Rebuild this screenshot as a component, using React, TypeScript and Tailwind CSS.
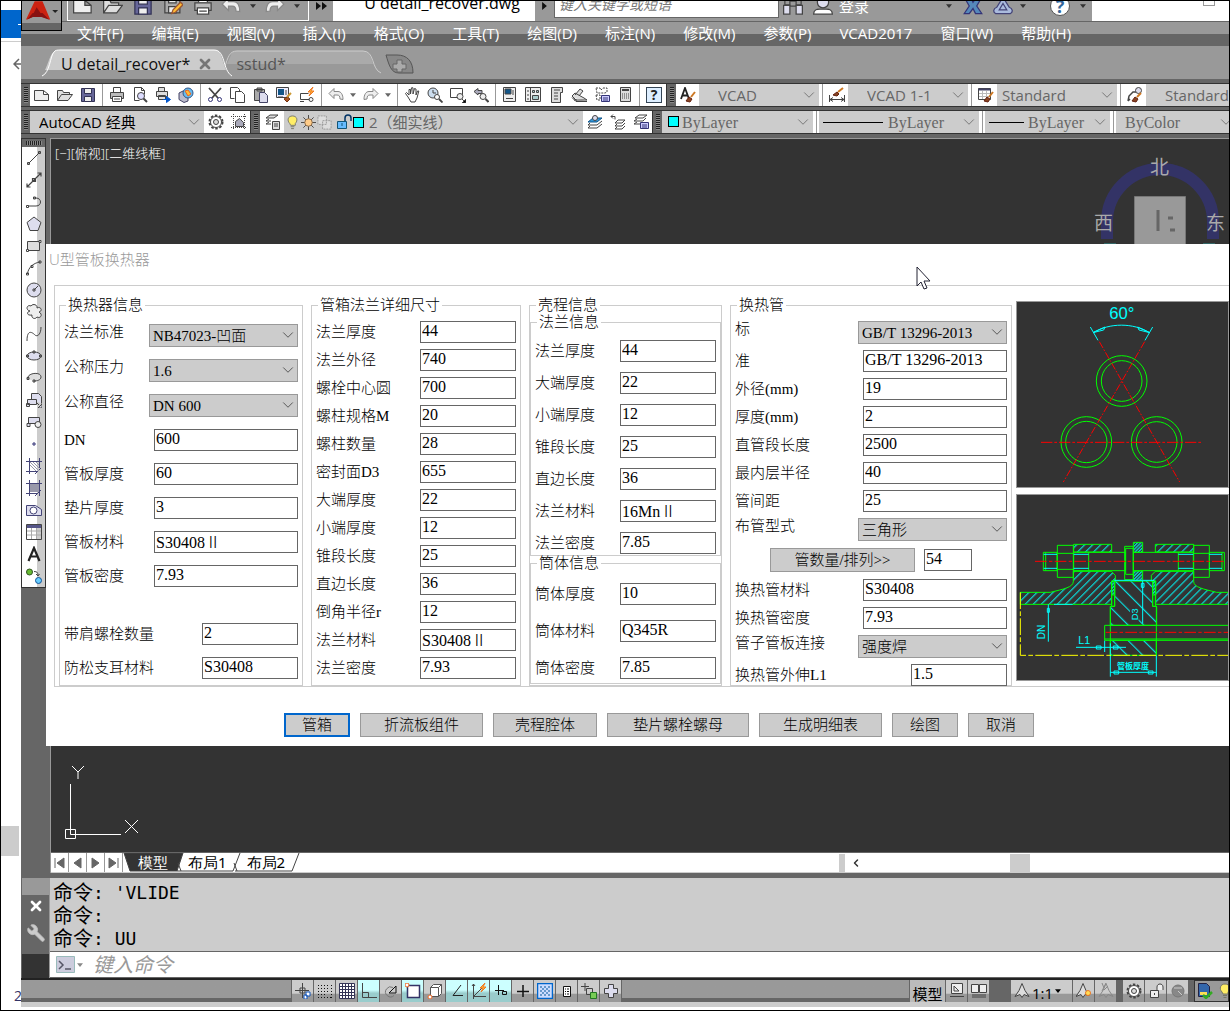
import { useId, type ReactNode } from "react";
import { ChevronDown, ChevronLeft, Wrench, X } from "lucide-react";

const icons: Record<string, ReactNode> = {
  new: <path d="M.5 3.500h9l5 4v6H.5zM9.500 3.500v4h5" fill="#eee" />,
  open: <path d="M.5 13.500v-10h5l1 2h6v2M.5 13.500l4-6h11l-4.500 6z" fill="#ddd" />,
  save: (
    <>
      <path d="M1.500 1.500h13v13h-13z" fill="#669" stroke="#335" />
      <path d="M4.500 1.500h7v5h-7zM4.500 9.500h7v5h-7z" fill="#eee" stroke="#335" />
    </>
  ),
  saveAs: (
    <>
      <path d="M1.500 1.500h12v12h-12z" fill="#aaa" />
      <path d="M4.500 1.500h6v4h-6zM4.500 8.500h6v5h-6z" fill="#eee" />
      <path d="M7 14l1-3 6-6 2 2-6 6z" fill="#fb3" stroke="#953" />
    </>
  ),
  print: (
    <>
      <path d="M4.500 5V.5h7V5" fill="#fff" />
      <path d="M1.500 5.500h13v6h-13z" fill="#bbb" />
      <path d="M3.500 9.500h9v5h-9zM5 12h6" fill="#fff" />
    </>
  ),
  preview: (
    <>
      <path d="M2.500 13.500V.5h7l3 3v4M2.500 13.500h5M9.500.5v3h3" fill="#fff" />
      <circle cx="9" cy="9" r="3.500" fill="#ddf" />
      <path d="M11.500 11.500l3.500 3.500" strokeWidth="2" />
    </>
  ),
  publish: (
    <>
      <path d="M3.500 4V.5h6V4M1.500 4.500h11v5h-11zM3.500 8.500h7v4h-7z" fill="#ddd" />
      <path d="M8 12.500h5M11.500 9.500l4 3-4 3z" stroke="#05c" fill="#05c" />
    </>
  ),
  dwf: (
    <>
      <path d="M1 6l4-2 5 3v7l-4 1.500-5-3z" fill="#bbc" stroke="#446" />
      <circle cx="10" cy="6" r="5" fill="#6be" stroke="#358" />
      <path d="M7 4l3-1 3 4-3 2z" fill="#fb3" stroke="#e62" />
    </>
  ),
  cut: (
    <>
      <path d="M2 1l9 10M14 1L5 11" strokeWidth="1.800" />
      <circle cx="3.500" cy="12.500" r="2" stroke="#337" />
      <circle cx="12.500" cy="12.500" r="2" stroke="#337" />
    </>
  ),
  copy: <path d="M.5 11.500V.5h7l2 2v2M.5 11.500h4M5.500 4.500h6l3 3v8h-9z" fill="#fff" />,
  paste: (
    <>
      <path d="M1.500 2.500h10v11h-10zM4 1h5v3H4z" fill="#aaa" />
      <path d="M6.500 5.500h5l3 3v7h-8z" fill="#dde" stroke="#446" />
    </>
  ),
  match: (
    <>
      <path d="M.5.5h12v10H.5z" fill="#eef" />
      <path d="M2 2h6v6H2z" fill="#158" stroke="none" />
      <path d="M10 3v5M2 10h5" />
      <path d="M8 12l3-2 3 2-3 3z" fill="#a52" stroke="#731" />
      <path d="M11 10l4-4" stroke="#c93" strokeWidth="2" />
    </>
  ),
  block: (
    <>
      <path d="M1.500 6.500h8M1.500 6.500v6h9M1 14.500h4" />
      <circle cx="12" cy="12.500" r="2" />
      <path d="M14 0l-5 5h3l-2 4 5-5h-3z" fill="#fb3" stroke="#e72" />
    </>
  ),
  undo: <path d="M1 6.500l5-5v3h4c3 0 5 3 5 8l-3-.5c0-3-1-4-3-4H6v3.500z" fill="#eee" stroke="#888" />,
  redo: <path d="M15 6.500l-5-5v3H6c-3 0-5 3-5 8l3-.5c0-3 1-4 3-4h3v3.500z" fill="#eee" stroke="#888" />,
  hand: <path d="M4 10L1.500 6.500l1-1L5 8V2.500h1.500V7L7.500.8H9V7l1.500-5.500L12 2v6l1.500-4h1.300L13 11l-2 4H7z" fill="#fff" />,
  zoomTime: (
    <>
      <circle cx="6" cy="6" r="5" fill="#cde" />
      <path d="M6 3v3h3" />
      <circle cx="10" cy="10" r="2.500" fill="#fff" />
      <path d="M12 12l3.500 3.500" strokeWidth="1.800" />
    </>
  ),
  zoomWindow: (
    <>
      <path d="M.5 1.500h12v9H.5z" />
      <circle cx="10" cy="9.500" r="3" fill="#eee" />
      <path d="M12 12l2 2M16 12v4h-4z" fill="#000" />
    </>
  ),
  zoomPrev: (
    <>
      <path d="M1 4.500l4-3v2h4v3H5v1.500z" fill="#aab" />
      <circle cx="10" cy="9.500" r="3" fill="#eee" />
      <path d="M12.500 12l3 3" strokeWidth="2" />
    </>
  ),
  props: (
    <>
      <path d="M1.500.5h12v14h-12z" fill="#eee" />
      <path d="M3 2h6v5H3z" fill="#158" />
      <path d="M11 3v5M4 11.500h7" />
    </>
  ),
  center: (
    <>
      <path d="M.5.500h15v14H.5zM5.500.500v14" fill="#eee" />
      <path d="M7.500 3.500h2v2h-2zM11.500 3.500h2v2h-2zM7.500 8.500h6v4h-6zM2 4h2M2 8h2M2 12h2" fill="#acc" />
    </>
  ),
  palette: <path d="M3.500 15.500V.5h11v5h-2v10zM6 3h6M6 6h4M6 9h4M6 12h4" fill="#ddd" />,
  sheets: <path d="M1 9l3-3 9 5 3 2H5zM4 8l5-6 3 2-4 5M1 10.500l4 4h11M3 13h3" fill="#ddd" />,
  markup: (
    <>
      <path d="M2 1h4l1 2 2-2h4v4l-2 1H3zM2 8h4v5H3z" strokeDasharray="2 1" />
      <path d="M7.500 8.500h8v6h-8zM9 11h5M9 13h5" fill="#ccf" stroke="#337" />
    </>
  ),
  calc: (
    <>
      <path d="M3.500.500h10v14h-10z" fill="#ddd" />
      <path d="M5 3h7" strokeWidth="2" />
      <path d="M5 7h7M5 9h7M5 11h7" strokeDasharray="1 1" />
    </>
  ),
  textStyle: (
    <>
      <path d="M1 12L5 1l4 11M2.500 8.500h5" stroke="#222" strokeWidth="1.800" />
      <path d="M6 14l3-4 3 2-2 3z" fill="#842" stroke="#621" />
      <path d="M11 10l4-5" stroke="#c72" strokeWidth="2" />
    </>
  ),
  dimStyle: (
    <>
      <path d="M.5 8v7M15.500 8v7M1 12.500h14M1 12.500l3-2M1 12.500l3 2M15 12.500l-3-2M15 12.500l-3 2" />
      <path d="M4 8l4-3 2 2-2 2z" fill="#842" stroke="#621" />
      <path d="M9 5l5-4" stroke="#c72" strokeWidth="2" />
    </>
  ),
  tableStyle: (
    <>
      <path d="M.5 1.500h12v11H.5z" fill="#fff" />
      <path d="M4.500 4v8M8.500 4v8M1 6.500h11M1 9.500h11" stroke="#bbb" />
      <path d="M.5 2.500h12" stroke="#446" strokeWidth="2" />
      <path d="M6 14l3-4 3 2-2 3z" fill="#842" stroke="#621" />
      <path d="M11 10l4-5" stroke="#c72" strokeWidth="2" />
    </>
  ),
  leaderStyle: (
    <>
      <path d="M1 14l1-5 4-4h3M1 14l2-2" strokeWidth="1.500" />
      <circle cx="11.500" cy="3.500" r="3" fill="#dde" />
      <path d="M5 14l3-4 3 2-2 3z" fill="#842" stroke="#621" />
      <path d="M10 10l4-4" stroke="#c72" strokeWidth="2" />
    </>
  ),
  gear: (
    <>
      <circle cx="8" cy="8" r="6.500" strokeWidth="2" strokeDasharray="2.500 1.600" />
      <circle cx="8" cy="8" r="5.500" fill="#fff" />
      <circle cx="8" cy="8" r="2.500" fill="#ddd" />
    </>
  ),
  workspace: (
    <>
      <path d="M2.500 0v16M13.500 0v16M0 2.500h16M0 13.500h16" strokeDasharray="1 1" />
      <path d="M4.500 7.500l4-3 4 4v4h-8z" fill="#aab" />
    </>
  ),
  layers: <path d="M1 4l4-3h8l-4 3zM1 7l3-2M1 7h5M1 10l3-2M1 10h5M7.500 7.500h7v8h-7zM9 10h4M9 12h4" fill="#ddd" />,
  layerCurrent: (
    <>
      <path d="M1 8l5-4h9l-5 4z" fill="#39d" stroke="#158" />
      <path d="M1 11l2-2M1 11h9l5-4M1 14l2-2M1 14h9l5-4" />
      <circle cx="8" cy="4" r="2.500" fill="#dde" />
    </>
  ),
  layerPrev: <path d="M5 2.500H1l2-2M1 2.500l2 2M5 2.500v3M5 9l3-3h7l-3 3zM5 12l2-2M5 12h7l3-3M5 15l2-2M5 15h7l3-3" />,
  layerState: (
    <>
      <path d="M2 4l4-3h8l-4 3zM1 7l3-2M1 7h9l3-3M1 10l3-2M1 10h6" />
      <path d="M7.500 8.500h8v6h-8zM9 11h5M9 13h5" fill="#ccf" stroke="#337" />
    </>
  ),
  bulb: <path d="M5 9C2 6 3 1 8 1s6 5 3 8v2H6zM6 12.500h4M6.500 14.500h3" fill="#fe6" stroke="#776" />,
  sun: (
    <>
      <path d="M8 0v16M0 8h16M2.500 2.500l11 11M13.500 2.500l-11 11" />
      <circle cx="8" cy="8" r="4" fill="#fc8" stroke="#864" />
    </>
  ),
  freeze: <path d="M1 1h9v9H1zM6 6h9v9H6z" stroke="#999" strokeDasharray="2 1" fill="#ddd" />,
  unlock: (
    <>
      <path d="M9 7V4c0-4 6-4 6 0v3" stroke="#036" strokeWidth="1.500" />
      <path d="M1.500 7.500h9v7h-9zM6 9v3" fill="#6bf" stroke="#157" />
    </>
  ),
  line: <path d="M2.500 13.500L13.500 2.500M1.500 12.500h2v2h-2zM12.500 1.500h2v2h-2z" />,
  xline: <path d="M1 15L15 1M1 11.500V15h3.500M11.500 1H15v3.500M6.500 6.500h3v3h-3z" strokeWidth="1.200" />,
  pline: <path d="M2 12h8c6 0 6-8 0-8H8M.5 11.500h2v2h-2zM7.500 3h2v2h-2z" />,
  polygon: <path d="M8 1l7 5.500-3 8H4l-3-8z" fill="#dde" />,
  rect: (
    <>
      <path d="M1.500 3.500h12v9h-12z" fill="#ddd" />
      <path d="M.5 11.500h2v2h-2zM13 2.500h2v2h-2z" fill="#fff" />
    </>
  ),
  arc: <path d="M1.500 14C2 8 7 3 14 2M.5 13h2v2h-2zM5 5.500h2v2H5zM13 1h2v2h-2z" />,
  circle: (
    <>
      <circle cx="8" cy="8" r="7" fill="#dde" />
      <path d="M8 8l4-4M7 7h2v2H7z" />
    </>
  ),
  cloud: <path d="M4 7c-5-1-3-7 1-5 2-3 7-1 6 2 4-2 6 3 2 4 4 2 2 7-2 5-2 3-6 1-5-2-5 1-6-3-2-4z" fill="#eee" />,
  spline: <path d="M1 15C1 2 7 7 9 9s6 0 6-8" />,
  ellipse: (
    <>
      <ellipse cx="8" cy="8" rx="7" ry="4" fill="#dde" />
      <path d="M.5 7h2v2h-2zM13.500 7h2v2h-2zM7 3h2v2H7z" />
    </>
  ),
  ellipseArc: <path d="M2 9C0 3 15 1 15 7c0 3-4 4-7 4M1 7.500h2v2H1zM7 10h2v2H7z" fill="#ddd" />,
  insert: <path d="M5.500 7.500v-6h7l3 3v7M1.500 7.500h9v5h-9zM.5 11.500h3v3h-3zM10 10l3 3M16 12v4h-4z" fill="#dde" />,
  makeBlock: (
    <>
      <path d="M2.500 3.500h11v6h-11zM1 9.500h3v3H1z" fill="#dde" />
      <circle cx="12" cy="10.500" r="3" fill="#eee" />
    </>
  ),
  point: <path d="M7 7h2v2H7z" stroke="#337" />,
  hatch: (
    <>
      <path d="M0 3.500h16M0 13.500h12M3.500 0v16M13.500 0v10M9 16l6-6" stroke="#447" />
      <path d="M4 7l6 6M4 4l9 9M7 4l6 6M10 4l3 3" stroke="#99a" />
    </>
  ),
  gradient: (
    <>
      <path d="M4 4h9v8H4z" fill="#99a" stroke="none" />
      <path d="M0 3.500h16M0 13.500h12M3.500 0v16M13.500 0v16M9 16l6-6" stroke="#447" />
    </>
  ),
  region: (
    <>
      <path d="M.5 3.500h9l6 4v6H.5z" fill="#dde" stroke="#447" />
      <circle cx="7.500" cy="8.500" r="3.500" fill="#fff" stroke="#447" />
    </>
  ),
  table: (
    <>
      <path d="M5.500 3v12M10.500 3v12M1 7h14M1 11h14" stroke="#aaa" />
      <path d="M.5.500h15v15H.5z" />
      <path d="M1 2.500h14" stroke="#558" strokeWidth="3" />
    </>
  ),
  text: <path d="M2.500 15L8 2l5.500 13M4.500 10.500h7" strokeWidth="2.200" stroke="#222" />,
  addSelected: (
    <>
      <circle cx="3.500" cy="4" r="3" fill="#6b3" stroke="#352" />
      <circle cx="12.500" cy="12.500" r="3" fill="#6cf" stroke="#159" />
      <path d="M8 3.500c3 0 4 1 4 4M10 6l2 2 1.500-2" />
    </>
  ),
  infer: (
    <>
      <path d="M7.500 0v15M0 7.500h14M5 5h5v5H5z" />
      <path d="M11 9h4v4h-4zM9 12h3v4H9z" stroke="#15b" fill="#fff" />
    </>
  ),
  snap: <path d="M1 2.500h12M1 5.500h12M1 8.500h12M1 11.500h9M1 14.500h14M14.500 2v13" stroke="#111" strokeDasharray="1 2" />,
  grid: <path d="M.5.500h15v15H.5zM3.500 0v16M6.500 0v16M9.500 0v16M12.500 0v16M0 3.500h16M0 6.500h16M0 9.500h16M0 12.500h16" fill="#fff" stroke="#335" />,
  ortho: <path d="M1.500 0v14.500H16M1.500 9.500h6v5" />,
  polar: (
    <>
      <path d="M10 4.500a5 5 0 1 0 1 8" stroke="#777" />
      <path d="M6 10l7-7v7H6" stroke="#111" />
    </>
  ),
  osnap: (
    <>
      <path d="M2.500 2.500h12v12h-12z" fill="#fff" stroke="#336" strokeWidth="1.500" />
      <circle cx="2" cy="2" r="2" fill="#fff" stroke="#e62" />
    </>
  ),
  osnap3d: (
    <>
      <path d="M3.500 4.500l3-3h8v9l-3 3h-8zM3.500 4.500h8v9M11.500 4.500l3-3" fill="#fff" stroke="#555" />
      <circle cx="3" cy="14" r="2" fill="#fff" stroke="#e62" />
    </>
  ),
  otrack: <path d="M12 2L4 12.500h10" stroke="#222" />,
  ducs: (
    <>
      <path d="M2.500 16V1M1 3l1.500-2L4 3M2 13.500h13M3 13l9-9" />
      <path d="M14 0l-5 5h3l-2 4 5-5h-3z" fill="#fb3" stroke="#e72" />
    </>
  ),
  dyn: <path d="M5.500 2v10M2 7.500h9M9.500 8.500h4v3h-4z" stroke="#111" />,
  lwt: <path d="M8 2v12M2 8.500h12" stroke="#111" strokeWidth="1.500" />,
  transparency: (
    <>
      <path d="M.5.500h15v15H.5z" fill="#cdf" stroke="#06c" strokeWidth="1.500" />
      <path d="M3 4h10M3 8h10M3 12h10" stroke="#69c" strokeWidth="2" strokeDasharray="2 2" />
      <path d="M5 6h8M5 10h8" stroke="#69c" strokeWidth="2" strokeDasharray="2 2" />
    </>
  ),
  quick: <path d="M4.500 3.500h7v10h-7zM6 6h1M8 6h2M6 8.500h1M8 8.500h2M6 11h1M8 11h2" fill="#fff" stroke="#111" />,
  cycling: (
    <>
      <path d="M4 0v8M0 3.500h8M5.500 5.500h6v6h-6z" stroke="#444" />
      <path d="M9.500 9.500h6v6h-6z" fill="#7c5" stroke="#272" />
    </>
  ),
  plus: <path d="M5.500 1.500h5v4h4v5h-4v4h-5v-4h-4v-5h4z" fill="#dde" />,
  paper: <path d="M2.500.500h11v10h-11zM5 3l5 5H5zM1 13.500h14" fill="#eee" />,
  views: <path d="M.5 1.500h7v8h-7zM8.500 1.500h7v8h-7zM1 12h14M1 14h14" fill="#eee" />,
  annotate: <path d="M8 .5l3 7 4 6-5-2-2 3-2-3-5 2 4-6z" fill="#ddd" />,
  annotateSun: (
    <>
      <path d="M7 .5l3 7 3 5-4-1-2 3-2-3-5 2 4-6z" fill="#ddd" />
      <circle cx="12" cy="10" r="2.500" fill="#fd5" stroke="#e72" />
    </>
  ),
  annotateOff: <path d="M4 0l2 5M8 0L4 8M6 7l4-4M8 .5l3 7 4 6-5-2-2 3-2-3-5 2 4-6z" stroke="#888" />,
  lock: <path d="M9 7V4c0-4 6-4 6 0v3M2.500 7.500h8v7h-8zM6.500 10v2" fill="#eee" />,
  hardware: (
    <>
      <circle cx="8" cy="8" r="6" fill="#888" stroke="#777" />
      <path d="M8 8l4 4M4 5h8" stroke="#ccc" />
    </>
  ),
  trusted: (
    <>
      <path d="M1.500.500h8l3 3v10h-11z" fill="#36a" stroke="#224" />
      <path d="M3 9h7v3H3z" fill="#fd5" stroke="none" />
      <path d="M6 12l3 3 6-6" stroke="#3a2" strokeWidth="2.500" />
    </>
  ),
  binoculars: (
    <>
      <path d="M1.500 1h4v6h-4zM10.500 1h4v6h-4zM5.500 4h5v4h-5z" fill="#999" />
      <path d="M.5 7.500h5v7h-5zM10.500 7.500h5v7h-5z" fill="#dde" />
    </>
  ),
  person: (
    <>
      <circle cx="8" cy="5" r="4.500" fill="#dde" />
      <path d="M.5 14.500c0-4 3-4 5-4h5c2 0 5 0 5 4z" fill="#fff" />
    </>
  ),
  exchange: <path d="M1 1h5l2 4 3-4h4l-4 7 4 6h-5l-2-4-3 4H1l4-6z" fill="#58b" stroke="#337" />,
  triangle: <path d="M8 1l5 8c3 1 3 4 1 5H2c-2-1-2-4 1-5zM8 6l3 5H5z" fill="#abd" stroke="#447" />,
};

function Icon({ name, size = "size-4" }: { name: string; size?: string }) {
  return (
    <svg viewBox="0 0 16 16" className={`${size} shrink-0`} fill="none" stroke="#444" aria-hidden="true">
      {icons[name]}
    </svg>
  );
}

const Caret = ({ className = "text-[#666]" }: { className?: string }) => (
  <svg viewBox="0 0 8 5" className={`h-[4px] w-[6px] shrink-0 ${className}`} aria-hidden="true">
    <path d="M0 0h8L4 5z" fill="currentColor" />
  </svg>
);

function Tool({ name, label }: { name: string; label: string }) {
  return (
    <button type="button" aria-label={label} className="flex h-[22px] w-[23px] shrink-0 items-center justify-center">
      <Icon name={name} />
    </button>
  );
}

const Sep = () => (
  <span className="flex h-[22px] w-[6px] shrink-0 justify-center bg-white">
    <span className="w-px bg-[#999]" />
  </span>
);

const Grip = () => (
  <span className="flex w-[9px] shrink-0 items-center justify-center bg-[#666]">
    <span className="h-4 w-1 bg-[repeating-linear-gradient(#222_0_1px,#888_1px_2px)]" />
  </span>
);

function Combo({ label, value, className, children }: { label: string; value: string; className: string; children?: ReactNode }) {
  return (
    <div className="relative flex h-[22px] shrink-0 bg-[#ccc]">
      <select aria-label={label} className={`h-[22px] appearance-none bg-[#ccc] outline-none ${className}`}>
        <option>{value}</option>
      </select>
      {children}
      <ChevronDown className="pointer-events-none absolute top-[2px] right-px size-[18px] text-[#777]" strokeWidth={1.3} />
    </div>
  );
}

const ui = "font-['Open_Sans','Noto_Sans_CJK_SC',sans-serif]";
const song = "font-['Liberation_Serif','Noto_Sans_CJK_SC',serif]";

function Field({ label, value, width = "w-[96px]" }: { label: string; value: string; width?: string }) {
  const id = useId();
  return (
    <div className="flex h-[22px] items-center justify-between">
      <label htmlFor={id} className="whitespace-nowrap">{label}</label>
      <input id={id} defaultValue={value} className={`h-[22px] border border-[#666] bg-white px-px pb-0.5 text-base leading-5 outline-none ${width}`} />
    </div>
  );
}

function SelectField({ label, value }: { label: string; value: string }) {
  const id = useId();
  return (
    <div className="flex h-[23px] items-start justify-between">
      <label htmlFor={id} className="leading-4 whitespace-nowrap">{label}</label>
      <div className="relative">
        <select id={id} className="block h-[23px] w-[149px] appearance-none border border-[#999] bg-[#ccc] px-[3px] leading-5 outline-none">
          <option>{value}</option>
        </select>
        <ChevronDown className="pointer-events-none absolute top-[2px] right-px size-[18px] text-[#555]" strokeWidth={1.3} />
      </div>
    </div>
  );
}

function Group({ title, className, children }: { title: string; className: string; children: ReactNode }) {
  return (
    <fieldset className={`min-w-0 shrink-0 border border-[#ccc] ${className}`}>
      <legend className="ml-[6px] h-4 px-[2px] leading-4">{title}</legend>
      {children}
    </fieldset>
  );
}

const exchanger = [["DN", "600"], ["管板厚度", "60"], ["垫片厚度", "3"], ["管板材料", "S30408Ⅱ"], ["管板密度", "7.93"]];
const channelFlange = [
  ["法兰厚度", "44"], ["法兰外径", "740"], ["螺栓中心圆", "700"], ["螺柱规格M", "20"], ["螺柱数量", "28"],
  ["密封面D3", "655"], ["大端厚度", "22"], ["小端厚度", "12"], ["锥段长度", "25"], ["直边长度", "36"],
  ["倒角半径r", "12"], ["法兰材料", "S30408Ⅱ"], ["法兰密度", "7.93"],
];
const shellFlange = [
  ["法兰厚度", "44"], ["大端厚度", "22"], ["小端厚度", "12"], ["锥段长度", "25"], ["直边长度", "36"],
  ["法兰材料", "16MnⅡ"], ["法兰密度", "7.85"],
];
const shell = [["筒体厚度", "10"], ["筒体材料", "Q345R"], ["筒体密度", "7.85"]];
const tube = [["准", "GB/T 13296-2013"], ["外径(mm)", "19"], ["厚度(mm)", "2"], ["直管段长度", "2500"], ["最内层半径", "40"], ["管间距", "25"]];

function PitchDrawing() {
  return (
    <svg viewBox="18 33 642 561" className="block h-[187px] w-[214px]" fill="none" strokeWidth="3">
      <g stroke="#0f0">
        <circle cx="335" cy="273" r="76" /><circle cx="335" cy="273" r="61" />
        <circle cx="229" cy="456" r="76" /><circle cx="229" cy="456" r="62" />
        <circle cx="440" cy="456" r="76" /><circle cx="440" cy="456" r="61" />
      </g>
      <path d="M93 457h484" stroke="#f00" strokeDasharray="34 6 8 6" />
      <path d="M268 155L509 576M404 155L160 576" stroke="#f00" strokeDasharray="22 5 5 5" />
      <path d="M241 111l23 40M428 111l-23 40M249 128c50-30 120-30 170 0M249 128l36-17-4 9zM419 128l-36-17 4 9z" stroke="#0ff" />
      <text x="298" y="86" fill="#0ff" fontSize="50" className="font-['Liberation_Sans',sans-serif]">60°</text>
    </svg>
  );
}

function SectionDrawing() {
  return (
    <svg viewBox="18 612 642 561" className="block h-[187px] w-[214px]" fill="none" strokeWidth="3">
      <defs>
        <pattern id="hatch" width="17" height="17" patternUnits="userSpaceOnUse" patternTransform="rotate(45)">
          <path d="M2 0v17" stroke="#0ff" strokeWidth="3" />
        </pattern>
        <pattern id="hatchWide" width="33" height="33" patternUnits="userSpaceOnUse" patternTransform="rotate(-45)">
          <path d="M2 0v33" stroke="#0ff" strokeWidth="3" />
        </pattern>
        <pattern id="hatchFine" width="7" height="7" patternUnits="userSpaceOnUse" patternTransform="rotate(45)">
          <path d="M2 0v7" stroke="#0ff" strokeWidth="3" />
        </pattern>
      </defs>
      <g stroke="#0f0">
        <path d="M191 763h114v23H191zM436 763h115v23H436z" fill="url(#hatch)" />
        <path d="M31 943V907h90c40-10 69-15 69-33v-30h114l12 12v18h-11v69z" fill="url(#hatch)" />
        <path d="M660 943V907h-40c-40-10-69-15-69-33v-30H436l-12 12v18h12v69z" fill="url(#hatch)" />
        <path d="M370 757h28v30h-28zM370 843h28v30h-28z" fill="url(#hatchFine)" />
        <path d="M317 873h107v0h4v76h12v57H301v-57h13v-76zM301 1051h138v45H301z" fill="url(#hatchWide)" />
        <path d="M305 873h9v76h-9zM428 873h9v76h-9z" />
        <path d="M305 873h9v42h-9zM428 873h9v42h-9z" fill="url(#hatchFine)" />
        <path d="M100 787h41v55h-41zM142 766h48v96h-48zM142 790h48M142 838h48M191 787h155v55H191zM236 787v55M370 787h180v55H370zM505 787v55M551 766h47v96h-47zM551 790h47M551 838h47M598 787h45v55h-45zM344 769h26v100h-26zM347 775h23v78h-23zM107 787v55M636 787v55" />
        <path d="M284 1006h376M284 1047h376M284 1051h376M284 1006v45M301 949v147M439 949v147" />
      </g>
      <path d="M101 793h40M101 835h40M191 793h45M191 835h45M505 793h45M505 835h45M598 793h38M598 835h38M313 871h120M132 943h56M115 943v112M112 955h6v12h-6zM398 873v128M394 880h8v12h-8zM198 1072h150M284 1052v34M301 1060v100M439 1096v64M301 1147h138M259 1068h14v9h-14zM310 1068h14v9h-14zM312 1143h14v9h-14zM415 1143h14v9h-14z" stroke="#0ff" />
      <path d="M75 814h569M287 1027h373" stroke="#f00" strokeDasharray="35 7 10 7" />
      <path d="M31 907v189h629" stroke="#ff0" strokeDasharray="50 7 14 7" />
      <path d="M360 960h26v32h-26z" fill="#333" />
      <g fill="#0ff" className="font-['Liberation_Sans','Noto_Sans_CJK_SC',sans-serif]">
        <text x="205" y="1061" fontSize="32">L1</text>
        <text transform="translate(104 1048) rotate(-90)" fontSize="30">DN</text>
        <text transform="translate(384 991) rotate(-90)" fontSize="28">D3</text>
        <text x="321" y="1136" fontSize="24" fontWeight="700">管板厚度</text>
      </g>
    </svg>
  );
}

const actions = [
  ["折流板组件", "w-[123px]"], ["壳程腔体", "w-[104px]"], ["垫片螺栓螺母", "w-[142px]"],
  ["生成明细表", "w-[123px]"], ["绘图", "w-[66px]"], ["取消", "w-[66px]"],
];

function ExchangerDialog() {
  return (
    <form className={`relative -ml-[5px] bg-white pb-[9px] text-[15px] font-light text-black ${song}`} role="dialog" aria-label="U型管板换热器">
      <h1 className={`h-[41px] pt-[3px] pl-[3px] text-[15px] leading-6 text-[#999] ${ui}`}>U型管板换热器</h1>
      <div className="ml-2 flex gap-2 border border-r-0 border-[#ccc] pt-[11px] pl-1">
        <Group title="换热器信息" className="w-[244px]">
          <div className="flex flex-col gap-3 px-1 pt-[11px]">
            <SelectField label="法兰标准" value="NB47023-凹面" />
            <SelectField label="公称压力" value="1.6" />
            <SelectField label="公称直径" value="DN 600" />
            {exchanger.map(([label, value]) => (
              <Field key={label} label={label} value={value} width="w-[144px]" />
            ))}
            <div className="mt-6 flex flex-col gap-3">
              <Field label="带肩螺栓数量" value="2" />
              <Field label="防松支耳材料" value="S30408" />
            </div>
          </div>
        </Group>
        <Group title="管箱法兰详细尺寸" className="w-[210px]">
          <div className="flex flex-col gap-[6px] px-1 pt-2 pb-[5px]">
            {channelFlange.map(([label, value]) => (
              <Field key={label} label={label} value={value} />
            ))}
          </div>
        </Group>
        <Group title="壳程信息" className="w-[193px]">
          <Group title="法兰信息" className="mt-px">
            <div className="flex flex-col gap-[10px] px-1 pt-[10px] pb-px">
              {shellFlange.map(([label, value]) => (
                <Field key={label} label={label} value={value} />
              ))}
            </div>
          </Group>
          <Group title="筒体信息" className="-mt-px">
            <div className="flex flex-col gap-[15px] px-1 pt-3 pb-1">
              {shell.map(([label, value]) => (
                <Field key={label} label={label} value={value} />
              ))}
            </div>
          </Group>
        </Group>
        <Group title="换热管" className="w-[282px]">
          <div className="-mb-px flex flex-col gap-[6px] px-1 pt-2">
            <SelectField label="标" value="GB/T 13296-2013" />
            {tube.map(([label, value]) => (
              <Field key={label} label={label} value={value} width="w-[144px]" />
            ))}
            <SelectField label="布管型式" value="三角形" />
            <div className="flex h-[26px] items-center gap-[9px] pl-[35px]">
              <button type="button" className="h-6 w-[145px] border border-[#999] bg-[#ccc] leading-5">管数量/排列&gt;&gt;</button>
              <input aria-label="管数量" defaultValue="54" className="h-[22px] w-12 border border-[#666] px-px pb-0.5 text-base leading-5" />
            </div>
            <Field label="换热管材料" value="S30408" width="w-[144px]" />
            <Field label="换热管密度" value="7.93" width="w-[144px]" />
            <SelectField label="管子管板连接" value="强度焊" />
            <Field label="换热管外伸L1" value="1.5" />
          </div>
        </Group>
        <div className="-ml-1 mt-1 flex min-w-0 flex-1 flex-col gap-[6px]">
          <div className="overflow-hidden bg-[#333] outline outline-[#999] -outline-offset-1"><PitchDrawing /></div>
          <div className="overflow-hidden bg-[#333] outline outline-[#999] -outline-offset-1"><SectionDrawing /></div>
        </div>
      </div>
      <div className="mt-[26px] flex gap-[10px] pl-[238px]">
        <button type="button" className="h-6 w-[66px] border-2 border-[#06c] bg-[#ccc] leading-5">管箱</button>
        {actions.map(([label, width]) => (
          <button key={label} type="button" className={`h-6 shrink-0 border border-[#999] bg-[#ccc] leading-5 ${width}`}>{label}</button>
        ))}
      </div>
      <svg viewBox="0 0 15 25" className="absolute top-[22px] left-[870px] h-[25px] w-[15px]" aria-hidden="true">
        <path d="M1 1v19l4-4 3 7 3-1-3-7h6z" fill="#fff" stroke="#223" />
      </svg>
    </form>
  );
}

const menus = ["文件(F)", "编辑(E)", "视图(V)", "插入(I)", "格式(O)", "工具(T)", "绘图(D)", "标注(N)", "修改(M)", "参数(P)", "VCAD2017", "窗口(W)", "帮助(H)"];

const drawTools = [
  ["line", "直线"], ["xline", "构造线"], ["pline", "多段线"], ["polygon", "多边形"], ["rect", "矩形"],
  ["arc", "圆弧"], ["circle", "圆"], ["cloud", "修订云线"], ["spline", "样条曲线"], ["ellipse", "椭圆"],
  ["ellipseArc", "椭圆弧"], ["insert", "插入块"], ["makeBlock", "创建块"], ["point", "点"], ["hatch", "图案填充"],
  ["gradient", "渐变色"], ["region", "面域"], ["table", "表格"], ["text", "多行文字"], ["addSelected", "添加选定对象"],
];

const modes: [string, string, boolean][] = [
  ["infer", "推断约束", false], ["snap", "捕捉", false], ["grid", "栅格", false], ["ortho", "正交", true],
  ["polar", "极轴", false], ["osnap", "对象捕捉", true], ["osnap3d", "三维对象捕捉", false], ["otrack", "对象追踪", true],
  ["ducs", "动态 UCS", true], ["dyn", "动态输入", true], ["lwt", "线宽", false], ["transparency", "透明度", false],
  ["quick", "快捷特性", false], ["cycling", "选择循环", false], ["plus", "注释监视器", false],
];

function StatusButton({ name, label, on = false }: { name: string; label: string; on?: boolean }) {
  return (
    <button
      type="button"
      aria-label={label}
      className={`flex w-[22px] shrink-0 items-center justify-center border-l border-[#666] ${
        on ? "bg-linear-to-b from-[#cff] from-45% to-[#9cc] to-60%" : "bg-linear-to-b from-[#ccc] from-60% to-[#999] to-65%"
      }`}
    >
      <Icon name={name} />
    </button>
  );
}

function TitleBar() {
  return (
    <header className={`flex h-5 items-end overflow-hidden bg-[#999] ${ui}`}>
      <div className="flex h-[30px] w-full min-w-0 items-center pl-[46px]">
        <div className="flex h-[30px] w-[242px] shrink-0 items-center border border-white">
          {["new", "open", "save", "saveAs", "print"].map((name) => (
            <button key={name} type="button" aria-label={name} className="flex w-[30px] justify-center">
              <Icon name={name} size="size-5" />
            </button>
          ))}
          <button type="button" aria-label="放弃" className="flex w-[26px] justify-center"><Icon name="undo" size="size-5" /></button>
          <span className="flex w-[18px] justify-center"><Caret className="text-[#333]" /></span>
          <button type="button" aria-label="重做" className="flex w-[26px] justify-center"><Icon name="redo" size="size-5" /></button>
          <span className="flex w-[18px] justify-center"><Caret className="text-[#333]" /></span>
        </div>
        <svg viewBox="0 0 12 8" className="mx-[6px] h-2 w-3 shrink-0"><path d="M1 0l5 4-5 4zM7 0l5 4-5 4z" fill="#111" /></svg>
        <div className="flex h-[30px] w-[202px] shrink-0 justify-center bg-white pl-4 text-base leading-6 text-black">U detail_recover.dwg</div>
        <svg viewBox="0 0 6 10" className="mx-[7px] h-2 w-[5px] shrink-0"><path d="M0 0l6 5-6 5z" fill="#111" /></svg>
        <input aria-label="搜索" placeholder="键入关键字或短语" className="-mt-1 h-[27px] w-[225px] shrink-0 border border-[#666] bg-white px-1 text-sm italic placeholder:text-[#777]" />
        <div className="flex flex-1 items-center pl-1">
          <Icon name="binoculars" size="size-5" />
          <span className="w-[10px]" />
          <Icon name="person" size="size-5" />
          <span className="pl-[6px] text-[15px] text-white">登录</span>
          <span className="ml-[77px]"><Caret className="text-[#333]" /></span>
          <span className="w-[11px]" />
          <Icon name="exchange" size="size-5" />
          <span className="w-[10px]" />
          <Icon name="triangle" size="size-5" />
          <span className="w-[7px]" />
          <Caret className="text-[#333]" />
          <span className="ml-6 flex size-5 items-center justify-center rounded-full border border-[#555] bg-white text-lg font-bold text-[#369]">?</span>
          <span className="w-[10px]" />
          <Caret className="text-[#333]" />
        </div>
        <div className="h-[30px] w-[137px] shrink-0 bg-white pl-[111px]">
          <div className="h-[15px] w-3 border border-[#999]" />
        </div>
      </div>
    </header>
  );
}

function Tabs() {
  return (
    <nav className={`relative flex h-[33px] items-center bg-[#999] pl-10 text-base ${ui}`}>
      <svg viewBox="0 0 400 33" className="absolute top-0 left-0 h-[33px] w-[400px]" fill="none">
        <path d="M24 24c4-8 5-16 9-18 1-2 4-2 6-2h156c5 0 6 10 10 20z" fill="#ccc" />
        <path d="M206 18l4-9c1-4 4-4 6-4h126c6 0 8 6 10 13z" fill="#aaa" />
        <path d="M204 20c3-8 4-15 12-15h126c12 0 8 18 18 22" stroke="#ccc" />
        <path d="M21 30c8-3 8-20 12-24 1-2 4-2 6-2h154c12 0 8 20 18 26" stroke="#fff" />
        <path d="M365 9h11c10 0 16 6 16 18h-14c-8 0-10-8-13-18z" fill="#888" stroke="#555" />
        <path d="M376 14h5v4h4v5h-4v3h-5v-3h-4v-5h4z" fill="#aaa" stroke="#666" />
      </svg>
      <a href="#recover" className="relative pt-[2px] text-[#111]">U detail_recover*</a>
      <X className="relative mx-[7px] mt-[2px] size-4 text-[#777]" strokeWidth={4} />
      <a href="#sstud" className="relative ml-4 pt-[2px] text-[#555]">sstud*</a>
    </nav>
  );
}

function Toolbars() {
  return (
    <div className={`bg-[#666] pt-1 pb-1 text-[15px] text-[#666] ${ui}`}>
      <div className="flex h-6 border-y border-[#333]">
        <Grip />
        <div className="flex shrink-0 items-center bg-white">
          <Tool name="new" label="新建" /><Tool name="open" label="打开" /><Tool name="save" label="保存" /><Sep />
          <Tool name="print" label="打印" /><Tool name="preview" label="打印预览" /><Tool name="publish" label="发布" /><Tool name="dwf" label="三维 DWF" /><Sep />
          <Tool name="cut" label="剪切" /><Tool name="copy" label="复制" /><Tool name="paste" label="粘贴" /><Tool name="match" label="特性匹配" /><Tool name="block" label="块编辑器" /><Sep />
          <Tool name="undo" label="放弃" /><span className="flex w-3 justify-center"><Caret /></span>
          <Tool name="redo" label="重做" /><span className="flex w-3 justify-center"><Caret /></span><Sep />
          <Tool name="hand" label="平移" /><Tool name="zoomTime" label="实时缩放" /><Tool name="zoomWindow" label="窗口缩放" /><Tool name="zoomPrev" label="缩放上一个" /><Sep />
          <Tool name="props" label="特性" /><Tool name="center" label="设计中心" /><Tool name="palette" label="工具选项板" /><Tool name="sheets" label="图纸集" /><Tool name="markup" label="标记集" /><Tool name="calc" label="计算器" /><Sep />
          <button type="button" aria-label="帮助" className="mx-1 flex h-4 w-4 items-center justify-center border border-[#345] bg-[#def] text-sm font-bold text-[#222]">?</button>
        </div>
        <span className="w-px shrink-0 bg-[#333]" />
        <Grip />
        <div className="flex bg-white">
          <Tool name="textStyle" label="文字样式" />
          <Combo label="文字样式" value="VCAD" className="w-[120px] pl-[19px]" />
          <Sep />
          <Tool name="dimStyle" label="标注样式" />
          <Combo label="标注样式" value="VCAD 1-1" className="w-[120px] pl-[19px]" />
          <Sep />
          <Tool name="tableStyle" label="表格样式" />
          <Combo label="表格样式" value="Standard" className="w-[120px] pl-[5px]" />
          <Sep />
          <Tool name="leaderStyle" label="多重引线样式" />
          <Combo label="多重引线样式" value="Standard" className="w-[120px] pl-[19px]" />
        </div>
      </div>
      <div className="mt-[3px] flex h-6 border-y border-[#333]">
        <Grip />
        <Combo label="工作空间" value="AutoCAD 经典" className="w-[174px] pl-[9px] text-black" />
        <div className="flex shrink-0 bg-white"><Tool name="gear" label="工作空间设置" /><Tool name="workspace" label="我的工作空间" /></div>
        <span className="w-px shrink-0 bg-[#333]" />
        <Grip />
        <div className="flex shrink-0 bg-white pl-px"><Tool name="layers" label="图层特性管理器" /></div>
        <Combo label="图层" value="2（细实线）" className="w-[299px] pl-[85px]">
          <span className="pointer-events-none absolute top-[3px] left-px flex items-center gap-px">
            <Icon name="bulb" size="size-[15px]" /><Icon name="sun" size="size-[15px]" /><Icon name="freeze" size="size-[15px]" />
            <span className="ml-[3px]"><Icon name="unlock" /></span>
            <span className="size-[11px] border border-black bg-[#0ff]" />
          </span>
        </Combo>
        <div className="flex shrink-0 bg-white"><Tool name="layerCurrent" label="置为当前" /><Tool name="layerPrev" label="上一个图层" /><Tool name="layerState" label="图层状态" /></div>
        <span className="w-px shrink-0 bg-[#333]" />
        <Grip />
        <Combo label="颜色" value="ByLayer" className={`w-[151px] pl-5 text-base ${song}`}>
          <span className="pointer-events-none absolute top-[5px] left-[6px] size-[11px] border border-black bg-[#0ff]" />
        </Combo>
        <Sep />
        <Combo label="线型" value="ByLayer" className={`w-[160px] pl-[69px] text-base ${song}`}>
          <span className="pointer-events-none absolute top-[11px] left-1 h-px w-[60px] bg-black" />
        </Combo>
        <Sep />
        <Combo label="线宽" value="ByLayer" className={`w-[125px] pl-[43px] text-base ${song}`}>
          <span className="pointer-events-none absolute top-[11px] left-1 h-px w-[35px] bg-black" />
        </Combo>
        <Sep />
        <Combo label="打印样式" value="ByColor" className={`w-[120px] pl-[9px] text-base ${song}`} />
      </div>
    </div>
  );
}

function ViewCube() {
  return (
    <svg viewBox="0 0 140 105" className={`absolute top-0 right-0 h-[105px] w-[140px] ${ui}`} fontSize="19" fill="#aaa">
      <path d="M18 100v-17a53 53 0 0 1 106 0v17" fill="none" stroke="#336" strokeWidth="12" />
      <path d="M45.500 57.500h51v50h-51z" fill="#999" stroke="#777" />
      <path d="M69 71v21M79 79h5M81 91h5" stroke="#666" strokeWidth="3" />
      <path d="M15 104.500h12M114 104.500h12" stroke="#366" />
      <text x="61" y="35">北</text>
      <text x="5" y="91">西</text>
      <text x="117" y="91">东</text>
    </svg>
  );
}

function LayoutTabs() {
  return (
    <div className="flex h-[21px] border-y border-t-[#666] border-b-[#ccc] bg-white text-[15px] text-black">
      {["M4 3v10M13 3v10L6 8z", "M12 3v10L5 8z", "M5 3v10l7-5z", "M4 3v10l7-5zM13 3v10"].map((d) => (
        <button key={d} type="button" aria-label="切换布局" className="w-[18px] shrink-0 border-r border-[#999]">
          <svg viewBox="0 0 16 16" className="size-4" fill="#666" stroke="#666"><path d={d} /></svg>
        </button>
      ))}
      <div className="relative flex min-w-0 shrink-0 gap-5 pl-[15px] leading-[18px]">
        <svg viewBox="0 0 180 20" className="absolute top-0 left-0 h-5 w-[180px]" fill="none" stroke="#444">
          <path d="M1 0h59l-6 18H7z" fill="#333" />
          <path d="M54 18h56l7-18M112 18h57l7-18M111 10l3 8M55 10l3 8" />
        </svg>
        <a href="#model" className="relative text-white">模型</a>
        <a href="#layout1" className="relative">布局1</a>
        <a href="#layout2" className="relative">布局2</a>
      </div>
      <div className="flex-1" />
      <div className="flex w-[390px] shrink-0 items-center bg-white">
        <span className="h-[18px] w-[6px] bg-[#ccc]" />
        <ChevronLeft className="ml-[5px] size-3 text-[#333]" strokeWidth={3} />
        <span className="ml-[148px] h-[18px] w-5 bg-[#ccc]" />
      </div>
    </div>
  );
}

function CommandLine() {
  const lines = ["'VLIDE", "", "UU"];
  return (
    <section className="flex border-t-[5px] border-[#666] bg-[#666] text-black">
      <div className="flex w-[29px] shrink-0 flex-col items-center border-r border-[#999] pl-px">
        <div className="h-[17px] w-full bg-[#999]" />
        <X className="mt-[3px] size-4 text-white" strokeWidth={4} />
        <Wrench className="mt-[9px] size-5 -scale-x-100 text-[#bbb]" fill="#ccc" strokeWidth={1} />
        <div className="mt-auto h-6 w-full bg-[#333]" />
      </div>
      <div className="flex-1">
        <div className="h-[73px] bg-[#ccc] pt-[3px] pl-[3px] font-['DejaVu_Sans_Mono','Noto_Sans_CJK_SC',monospace] text-lg">
          {lines.map((text, i) => (
            <p key={i} className="flex h-[23px] items-center whitespace-pre">
              <span className="text-xl">命令</span>: {text}
            </p>
          ))}
        </div>
        <div className="flex h-[27px] items-center gap-[6px] border-y border-[#666] bg-white pl-[6px]">
          <svg viewBox="0 0 19 17" className="h-[17px] w-[19px]" fill="none">
            <path d="M.5.500h18v16H.5z" fill="#ccd" stroke="#9bb" />
            <path d="M3 5l4 4-4 4M9 13h6" stroke="#556" strokeWidth="1.500" />
          </svg>
          <Caret className="-ml-1 text-[#888]" />
          <input aria-label="命令" placeholder="键入命令" className={`ml-1 flex-1 bg-white text-xl leading-6 italic outline-none placeholder:text-[#999] ${ui}`} />
        </div>
      </div>
    </section>
  );
}

function StatusBar() {
  return (
    <footer className={`flex h-6 border-t-2 border-[#222] bg-linear-to-b from-[#999] from-80% to-[#666] to-80% text-[15px] text-black ${ui}`}>
      <div className="w-[270px] shrink-0" />
      {modes.map(([name, label, on]) => (
        <StatusButton key={name} name={name} label={label} on={on} />
      ))}
      <div className="flex-1 border-l border-[#666]" />
      <button type="button" className="w-9 shrink-0 border-l border-[#666] bg-[#bbb] pt-1 leading-5">模型</button>
      <StatusButton name="paper" label="快速查看布局" />
      <StatusButton name="views" label="快速查看图形" />
      <span className="w-[22px] shrink-0 bg-[#666]" />
      <button type="button" className="flex w-[61px] shrink-0 items-center gap-[2px] bg-linear-to-b from-[#ccc] from-60% to-[#999] to-65% pl-[3px]">
        <Icon name="annotate" />
        <span className="pt-1">1:1</span>
        <Caret className="text-black" />
      </button>
      <StatusButton name="annotateSun" label="注释可见性" />
      <StatusButton name="annotateOff" label="自动缩放" />
      <span className="w-[6px] shrink-0 bg-[#666]" />
      <StatusButton name="gear" label="切换工作空间" />
      <StatusButton name="lock" label="工具栏锁定" />
      <StatusButton name="hardware" label="硬件加速" />
      <span className="w-[6px] shrink-0 bg-[#666]" />
      <div className="flex w-[35px] shrink-0 items-center gap-1 overflow-hidden border border-[#333] bg-[#999] pl-[2px]">
        <Icon name="trusted" />
        <Icon name="bulb" />
      </div>
    </footer>
  );
}

export default function App() {
  return (
    <div className="flex min-h-screen overflow-hidden border border-black bg-white">
      <aside className="flex w-5 shrink-0 flex-col overflow-hidden">
        <div className="mt-[9px] flex h-7 items-center justify-end overflow-hidden bg-[#06c]"><span className="h-px w-[3px] bg-white" /></div>
        <div className="mt-[3px] h-px bg-[#ccc]" />
        <svg viewBox="0 0 10 12" className="mt-4 ml-3 h-3 w-[10px]" fill="none" stroke="#666" strokeWidth="1.500"><path d="M6 1L1 6l5 5M1 6h9" /></svg>
        <div className="flex-1" />
        <div className="h-[30px] w-[18px] bg-[#ccc]" />
        <div className={`mt-[130px] mb-1 pl-[13px] text-sm leading-5 text-[#336] ${ui}`}>2</div>
      </aside>
      <div className="flex min-w-0 flex-1 flex-col">
        <div className="relative flex flex-1 flex-col">
          <TitleBar />
          <nav className={`flex h-[25px] items-center gap-7 border-t border-[#666] bg-linear-to-b from-[#999] from-52% to-[#666] to-52% pb-[2px] pl-14 text-[15px] whitespace-nowrap text-white ${ui}`}>
            {menus.map((menu) => (
              <a key={menu} href={`#${menu}`}>{menu}</a>
            ))}
          </nav>
          <button type="button" aria-label="应用程序菜单" className="absolute -top-px left-0 flex h-[31px] w-[41px] items-start border border-black bg-linear-to-b from-[#999] from-75% to-[#666] to-75%">
            <svg viewBox="0 0 40 22" className="h-[22px] w-10">
              <path d="M13 0h8l8 19-8-3H11l-7 3z" fill="#c21" />
              <path d="M15 6l4 6h-7zM5 19l6-7h10l7 7-8-3h-9z" fill="#811" />
              <path d="M31 9h6l-3 3z" fill="#222" />
            </svg>
          </button>
          <Tabs />
          <Toolbars />
          <div className="flex flex-1 bg-[#666]">
            <div className="w-[25px] shrink-0">
              <div className="flex flex-col border border-[#333] bg-linear-to-r from-white from-65% to-[#ccc] to-65%">
                <div className="flex h-2 items-center justify-center bg-[#666]">
                  <span className="h-1 w-4 bg-[repeating-linear-gradient(90deg,#222_0_1px,#888_1px_2px)]" />
                </div>
                {drawTools.map(([name, label]) => (
                  <button key={name} type="button" aria-label={label} className="flex h-[22px] items-center justify-center">
                    <Icon name={name} />
                  </button>
                ))}
              </div>
            </div>
            <main className="ml-1 flex min-w-0 flex-1 flex-col border-t border-l border-[#999] bg-[#333]">
              <div className="relative h-[105px] pt-[2px] pl-1">
                <p className={`text-[13px] leading-6 font-light text-white ${ui}`}>[−][俯视][二维线框]</p>
                <ViewCube />
              </div>
              <ExchangerDialog />
              <div className="flex-1 pt-5 pl-[14px]">
                <svg viewBox="0 0 75 74" className="h-[74px] w-[75px]" fill="none" stroke="#fff">
                  <path d="M7 0l6 6 6-6M13 6v7M5.500 18v50.500H56M.5 63.500h10v9H.5zM60 54l13 13M73 54L60 67" />
                </svg>
              </div>
              <LayoutTabs />
            </main>
          </div>
          <CommandLine />
          <StatusBar />
        </div>
        <div className="mb-[3px] h-[5px] bg-[#ccc]" />
      </div>
    </div>
  );
}
